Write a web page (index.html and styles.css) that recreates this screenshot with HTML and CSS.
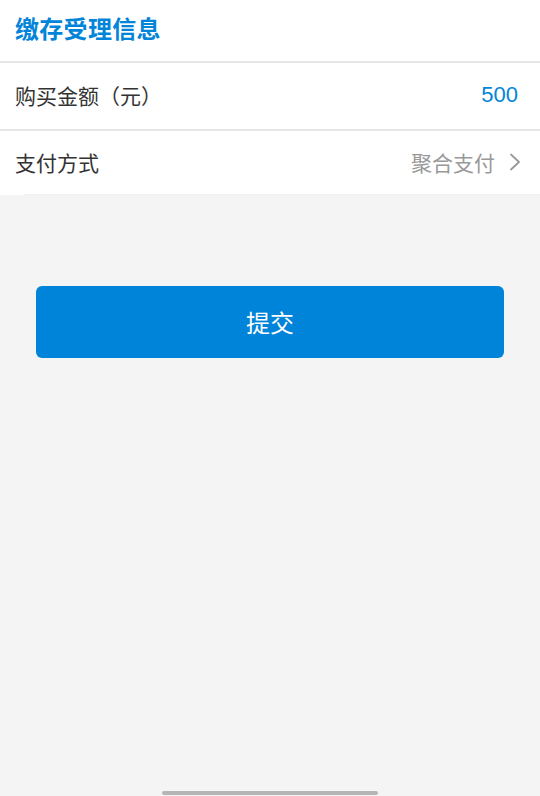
FILE: index.html
```html
<!DOCTYPE html>
<html lang="zh-CN">
<head>
<meta charset="utf-8">
<title>缴存受理信息</title>
<link rel="stylesheet" href="styles.css">
</head>
<body>
<div class="page">
  <header class="title-bar">
    <h1 class="title">缴存受理信息</h1>
  </header>
  <section class="form">
    <div class="row row-first">
      <span class="label">购买金额（元）</span>
      <span class="amount">500</span>
    </div>
    <div class="row row-last">
      <span class="label">支付方式</span>
      <span class="choice">
        <span class="choice-text">聚合支付</span>
        <svg class="chevron" width="12" height="18" viewBox="0 0 12 18" aria-hidden="true">
          <path d="M2 1.5 L10 9 L2 16.5" fill="none" stroke="#999999" stroke-width="1.8" stroke-linecap="round" stroke-linejoin="round"/>
        </svg>
      </span>
    </div>
  </section>
  <div class="actions">
    <button class="submit" type="button">提交</button>
  </div>
  <div class="home-indicator"></div>
</div>
</body>
</html>
```

FILE: styles.css
```css
html, body {
  margin: 0;
  padding: 0;
  background: #f4f4f4;
}

body {
  font-family: "Noto Sans CJK SC", "Noto Sans", sans-serif;
  color: #333333;
}

.page {
  min-height: 796px;
  position: relative;
}

.title-bar {
  background: #ffffff;
  height: 61px;
  display: flex;
  align-items: center;
  padding: 0 15px;
  border-bottom: 2px solid #e6e6e6;
  box-sizing: content-box;
}

.title {
  margin: 0;
  font-size: 24px;
  font-weight: 700;
  color: #0285d9;
  line-height: 1;
  margin-top: -6px;
  letter-spacing: 0.3px;
}

.form {
  background: #ffffff;
}

.row {
  display: flex;
  align-items: center;
  justify-content: space-between;
  padding: 0 22px 2px 15px;
  position: relative;
  box-sizing: border-box;
}

.row-first {
  height: 68px;
  border-bottom: 2px solid #e6e6e6;
}

.row-last {
  height: 64px;
  padding-right: 19px;
}

.row-last::after {
  content: "";
  position: absolute;
  left: 24px;
  right: 0;
  bottom: 0;
  height: 1px;
  background: #f1f1f1;
}

.label {
  font-size: 21px;
  color: #333333;
  line-height: 1;
}

.amount {
  font-family: "Liberation Sans", "Noto Sans", sans-serif;
  font-size: 22px;
  color: #0285d9;
  line-height: 1;
}

.choice {
  display: flex;
  align-items: center;
  gap: 14px;
}

.choice-text {
  font-size: 21px;
  color: #999999;
  line-height: 1;
}

.chevron {
  display: block;
}

.actions {
  padding: 91px 36px 0;
}

.submit {
  display: block;
  width: 100%;
  height: 72px;
  border: none;
  border-radius: 6px;
  background: #0084d9;
  color: #ffffff;
  font-family: "Noto Sans CJK SC", "Noto Sans", sans-serif;
  font-size: 24px;
  line-height: 1;
  padding: 0;
}

.home-indicator {
  position: absolute;
  left: 162px;
  width: 216px;
  bottom: 1px;
  height: 4px;
  border-radius: 2px;
  background: #b5b5b5;
}
```
